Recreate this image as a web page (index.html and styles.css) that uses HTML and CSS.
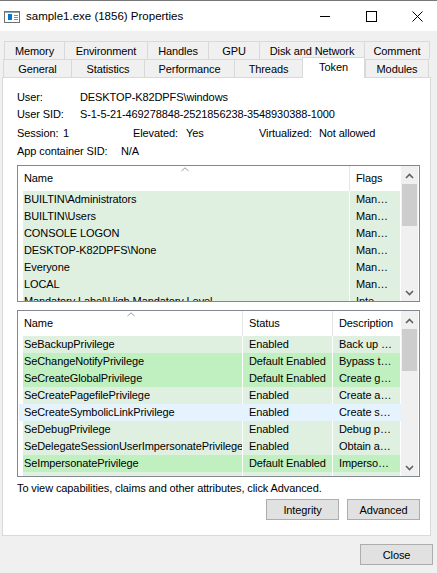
FILE: index.html
```html
<!DOCTYPE html>
<html>
<head>
<meta charset="utf-8">
<title>sample1.exe (1856) Properties</title>
<link rel="stylesheet" href="styles.css">
</head>
<body>
<div class="window">
  <div class="titlebar">
    <svg class="app-icon" width="16" height="12" viewBox="0 0 16 12">
      <rect x="0.5" y="0.5" width="15" height="11" fill="#ffffff" stroke="#707070"/>
      <rect x="1" y="1" width="14" height="1" fill="#a0a0a0"/>
      <rect x="4" y="3" width="4" height="6" fill="#0078d7"/>
      <rect x="10" y="4" width="4" height="1" fill="#8a8a8a"/>
      <rect x="10" y="6" width="4" height="1" fill="#8a8a8a"/>
      <rect x="10" y="8" width="4" height="1" fill="#8a8a8a"/>
    </svg>
    <span class="title">sample1.exe (1856) Properties</span>
    <div class="caption">
      <div class="cap-btn">
        <svg width="10" height="10" viewBox="0 0 10 10"><line x1="0" y1="5.5" x2="10" y2="5.5" stroke="#000" stroke-width="1"/></svg>
      </div>
      <div class="cap-btn">
        <svg width="11" height="11" viewBox="0 0 11 11"><rect x="0.5" y="0.5" width="10" height="10" fill="none" stroke="#000" stroke-width="1"/></svg>
      </div>
      <div class="cap-btn">
        <svg width="11" height="11" viewBox="0 0 11 11"><path d="M0.5 0.5 L10.5 10.5 M10.5 0.5 L0.5 10.5" stroke="#000" stroke-width="1" fill="none"/></svg>
      </div>
    </div>
  </div>

  <div class="tabs">
    <div class="tab-row row1">
      <div class="tab t-memory">Memory</div>
      <div class="tab t-env">Environment</div>
      <div class="tab t-handles">Handles</div>
      <div class="tab t-gpu">GPU</div>
      <div class="tab t-disk">Disk and Network</div>
      <div class="tab t-comment last">Comment</div>
    </div>
    <div class="tab-row row2">
      <div class="tab t-general">General</div>
      <div class="tab t-stats">Statistics</div>
      <div class="tab t-perf">Performance</div>
      <div class="tab t-threads">Threads</div>
      <div class="tab t-token selected">Token</div>
      <div class="tab t-modules last">Modules</div>
    </div>
  </div>

  <div class="panel">
    <div class="info-row r1"><span class="lbl-user">User:</span><span>DESKTOP-K82DPFS\windows</span></div>
    <div class="info-row r2"><span class="lbl-user">User SID:</span><span>S-1-5-21-469278848-2521856238-3548930388-1000</span></div>
    <div class="info-row r3">
      <div class="grp-session"><span class="lbl-session">Session:</span><span>1</span></div>
      <div class="grp-elev"><span class="lbl-elev">Elevated:</span><span>Yes</span></div>
      <div class="grp-virt"><span class="lbl-virt">Virtualized:</span><span>Not allowed</span></div>
    </div>
    <div class="info-row r4"><span class="lbl-app">App container SID:</span><span>N/A</span></div>

    <div class="list groups">
      <div class="list-main">
        <div class="lhead">
          <div class="hc hc-name">Name
            <svg class="sort" width="8" height="5" viewBox="0 0 8 5"><polyline points="0.5,4 4,0.8 7.5,4" fill="none" stroke="#9a9a9a" stroke-width="1"/></svg>
          </div>
          <div class="hc hc-last">Flags</div>
        </div>
        <div class="row en"><div class="cell c1">BUILTIN\Administrators</div><div class="cell c2">Man…</div></div>
        <div class="row en"><div class="cell c1">BUILTIN\Users</div><div class="cell c2">Man…</div></div>
        <div class="row en"><div class="cell c1">CONSOLE LOGON</div><div class="cell c2">Man…</div></div>
        <div class="row en"><div class="cell c1">DESKTOP-K82DPFS\None</div><div class="cell c2">Man…</div></div>
        <div class="row en"><div class="cell c1">Everyone</div><div class="cell c2">Man…</div></div>
        <div class="row en"><div class="cell c1">LOCAL</div><div class="cell c2">Man…</div></div>
        <div class="row en"><div class="cell c1">Mandatory Label\High Mandatory Level</div><div class="cell c2">Inte…</div></div>
      </div>
      <div class="sb">
        <div class="sb-arrow up"><svg width="9" height="6" viewBox="0 0 9 6"><polyline points="1,5 4.5,1.5 8,5" fill="none" stroke="#606060" stroke-width="1.6"/></svg></div>
        <div class="sb-thumb"></div>
        <div class="sb-space"></div>
        <div class="sb-arrow"><svg width="9" height="6" viewBox="0 0 9 6"><polyline points="1,1 4.5,4.5 8,1" fill="none" stroke="#606060" stroke-width="1.6"/></svg></div>
      </div>
    </div>

    <div class="list privs">
      <div class="list-main">
        <div class="lhead">
          <div class="hc hc-name">Name
            <svg class="sort" width="8" height="5" viewBox="0 0 8 5"><polyline points="0.5,4 4,0.8 7.5,4" fill="none" stroke="#9a9a9a" stroke-width="1"/></svg>
          </div>
          <div class="hc hc-status">Status</div>
          <div class="hc hc-last">Description</div>
        </div>
        <div class="row en"><div class="cell c1">SeBackupPrivilege</div><div class="cell c2">Enabled</div><div class="cell c3">Back up …</div></div>
        <div class="row de"><div class="cell c1">SeChangeNotifyPrivilege</div><div class="cell c2">Default Enabled</div><div class="cell c3">Bypass t…</div></div>
        <div class="row de"><div class="cell c1">SeCreateGlobalPrivilege</div><div class="cell c2">Default Enabled</div><div class="cell c3">Create g…</div></div>
        <div class="row en"><div class="cell c1">SeCreatePagefilePrivilege</div><div class="cell c2">Enabled</div><div class="cell c3">Create a…</div></div>
        <div class="row hover"><div class="cell c1">SeCreateSymbolicLinkPrivilege</div><div class="cell c2">Enabled</div><div class="cell c3">Create s…</div></div>
        <div class="row en"><div class="cell c1">SeDebugPrivilege</div><div class="cell c2">Enabled</div><div class="cell c3">Debug p…</div></div>
        <div class="row en"><div class="cell c1">SeDelegateSessionUserImpersonatePrivilege</div><div class="cell c2">Enabled</div><div class="cell c3">Obtain a…</div></div>
        <div class="row de"><div class="cell c1">SeImpersonatePrivilege</div><div class="cell c2">Default Enabled</div><div class="cell c3">Imperso…</div></div>
        <div class="row en partial"><div class="cell c1"></div><div class="cell c2"></div><div class="cell c3"></div></div>
      </div>
      <div class="sb">
        <div class="sb-arrow up"><svg width="9" height="6" viewBox="0 0 9 6"><polyline points="1,5 4.5,1.5 8,5" fill="none" stroke="#606060" stroke-width="1.6"/></svg></div>
        <div class="sb-thumb"></div>
        <div class="sb-space"></div>
        <div class="sb-arrow"><svg width="9" height="6" viewBox="0 0 9 6"><polyline points="1,1 4.5,4.5 8,1" fill="none" stroke="#606060" stroke-width="1.6"/></svg></div>
      </div>
    </div>

    <div class="note">To view capabilities, claims and other attributes, click Advanced.</div>
    <div class="btn-row">
      <button class="btn">Integrity</button>
      <button class="btn">Advanced</button>
    </div>
  </div>

  <div class="footer">
    <button class="btn">Close</button>
  </div>
</div>
</body>
</html>
```

FILE: styles.css
```css
html, body {
  margin: 0;
  padding: 0;
}

body {
  width: 437px;
  height: 573px;
  overflow: hidden;
  background: #f0f0f0;
  font-family: "Liberation Sans", Arial, sans-serif;
  font-size: 11px;
  letter-spacing: -0.1px;
  color: #000;
}

.window {
  border-top: 1px solid #777777;
  height: 572px;
  display: flex;
  flex-direction: column;
}

/* Title bar */
.titlebar {
  height: 30px;
  flex: none;
  background: #ffffff;
  display: flex;
  align-items: center;
}

.app-icon {
  margin-left: 4px;
  margin-top: 2px;
  flex: none;
}

.title {
  margin-left: 6px;
  font-size: 11.5px;
  letter-spacing: 0;
}

.caption {
  margin-left: auto;
  margin-right: -3px;
  display: flex;
  height: 30px;
}

.cap-btn {
  width: 46px;
  height: 30px;
  display: flex;
  align-items: center;
  justify-content: center;
}

/* Tabs */
.tabs {
  padding-top: 10px;
  flex: none;
}

.tab-row {
  display: flex;
  height: 18px;
}

.row1 { margin-left: 4px; }
.row2 { margin-left: 3px; }

.tab {
  box-sizing: border-box;
  height: 18px;
  border-top: 1px solid #d9d9d9;
  border-left: 1px solid #d9d9d9;
  display: flex;
  align-items: center;
  justify-content: center;
  white-space: nowrap;
  padding-top: 1px;
}

.tab.last { border-right: 1px solid #d9d9d9; }

.tab.selected {
  position: relative;
  z-index: 1;
  background: #ffffff;
  height: 21px;
  margin-top: -2px;
  border-right: 1px solid #d9d9d9;
  padding-top: 0;
  padding-bottom: 2px;
}

.t-memory { width: 60px; }
.t-env { width: 83px; }
.t-handles { width: 61px; }
.t-gpu { width: 51px; }
.t-disk { width: 105px; }
.t-comment { width: 66px; }

.t-general { width: 68px; }
.t-stats { width: 73px; }
.t-perf { width: 90px; }
.t-threads { width: 68px; }
.t-token { width: 63px; }
.t-modules { width: 64px; }

/* Panel */
.panel {
  flex: none;
  box-sizing: border-box;
  margin-left: 2px;
  width: 429px;
  height: 459px;
  border: 1px solid #d9d9d9;
  background: #ffffff;
  padding: 11px 10px 0 14px;
}

.info-row {
  display: flex;
  height: 17px;
  line-height: 17px;
  white-space: nowrap;
}

.r3 { margin-top: 2px; }
.r4 { margin-top: 1px; }

.lbl-user { width: 63px; }
.grp-session { width: 116px; display: flex; }
.lbl-session { width: 46px; }
.grp-elev { width: 126px; display: flex; }
.lbl-elev { width: 53px; }
.grp-virt { display: flex; }
.lbl-virt { width: 60px; }
.lbl-app { width: 104px; }

/* Lists */
.list {
  box-sizing: border-box;
  width: 403px;
  border: 1px solid #828790;
  background: #ffffff;
  display: flex;
  overflow: hidden;
}

.groups {
  margin-top: 5px;
  height: 137px;
}

.privs {
  margin-top: 8px;
  height: 167px;
}

.list-main {
  width: 383px;
  flex: none;
  overflow: hidden;
}

.lhead {
  display: flex;
  height: 25px;
}

.hc {
  box-sizing: border-box;
  height: 25px;
  line-height: 25px;
  padding-left: 6px;
  border-right: 1px solid #e5e5e5;
  white-space: nowrap;
  position: relative;
}

.hc-last {
  border-right: none;
  flex: 1;
}

.groups .hc-name { width: 332px; }
.privs .hc-name { width: 225px; }
.privs .hc-status { width: 90px; }

.sort {
  position: absolute;
  top: 1px;
  left: 50%;
  margin-left: -3px;
}

.row {
  display: flex;
  height: 17px;
  line-height: 17px;
  white-space: nowrap;
}

.row.partial { height: 4px; }

.cell {
  box-sizing: border-box;
  overflow: hidden;
  margin-right: 1px;
  padding-left: 6px;
}

.cell.c1 {
  margin-left: 5px;
  padding-left: 1px;
}

.groups .c1 { width: 326px; }
.groups .c2 { width: 50px; }

.privs .c1 { width: 219px; }
.privs .c2 { width: 89px; }
.privs .c3 { width: 67px; }

.en .cell { background: #e0f0e0; }
.de .cell { background: #c0f0c0; }

.row.hover {
  background: #e5f3ff;
  margin-left: 1px;
}

.row.hover .c1 { margin-left: 4px; }

/* Scrollbars */
.sb {
  width: 17px;
  flex: none;
  background: #f0f0f0;
  display: flex;
  flex-direction: column;
  align-items: center;
}

.sb-arrow {
  width: 17px;
  height: 17px;
  flex: none;
  display: flex;
  align-items: center;
  justify-content: center;
}

.sb-arrow.up { padding-top: 2px; box-sizing: border-box; }

.sb-thumb {
  width: 15px;
  height: 42px;
  margin-top: 1px;
  flex: none;
  background: #cdcdcd;
}

.sb-space { flex: 1; }

/* Bottom text and buttons */
.note {
  margin-top: 3px;
  height: 17px;
  line-height: 17px;
  white-space: nowrap;
}

.btn-row {
  margin-top: 2px;
  display: flex;
  justify-content: flex-end;
  gap: 8px;
}

.btn {
  box-sizing: border-box;
  width: 73px;
  height: 21px;
  padding: 0;
  border: 1px solid #adadad;
  background: #e1e1e1;
  font-family: inherit;
  font-size: 11px;
  letter-spacing: -0.1px;
  color: #000;
}

.footer {
  flex: none;
  display: flex;
  justify-content: flex-end;
  margin-top: 8px;
  padding-right: 4px;
}
```
